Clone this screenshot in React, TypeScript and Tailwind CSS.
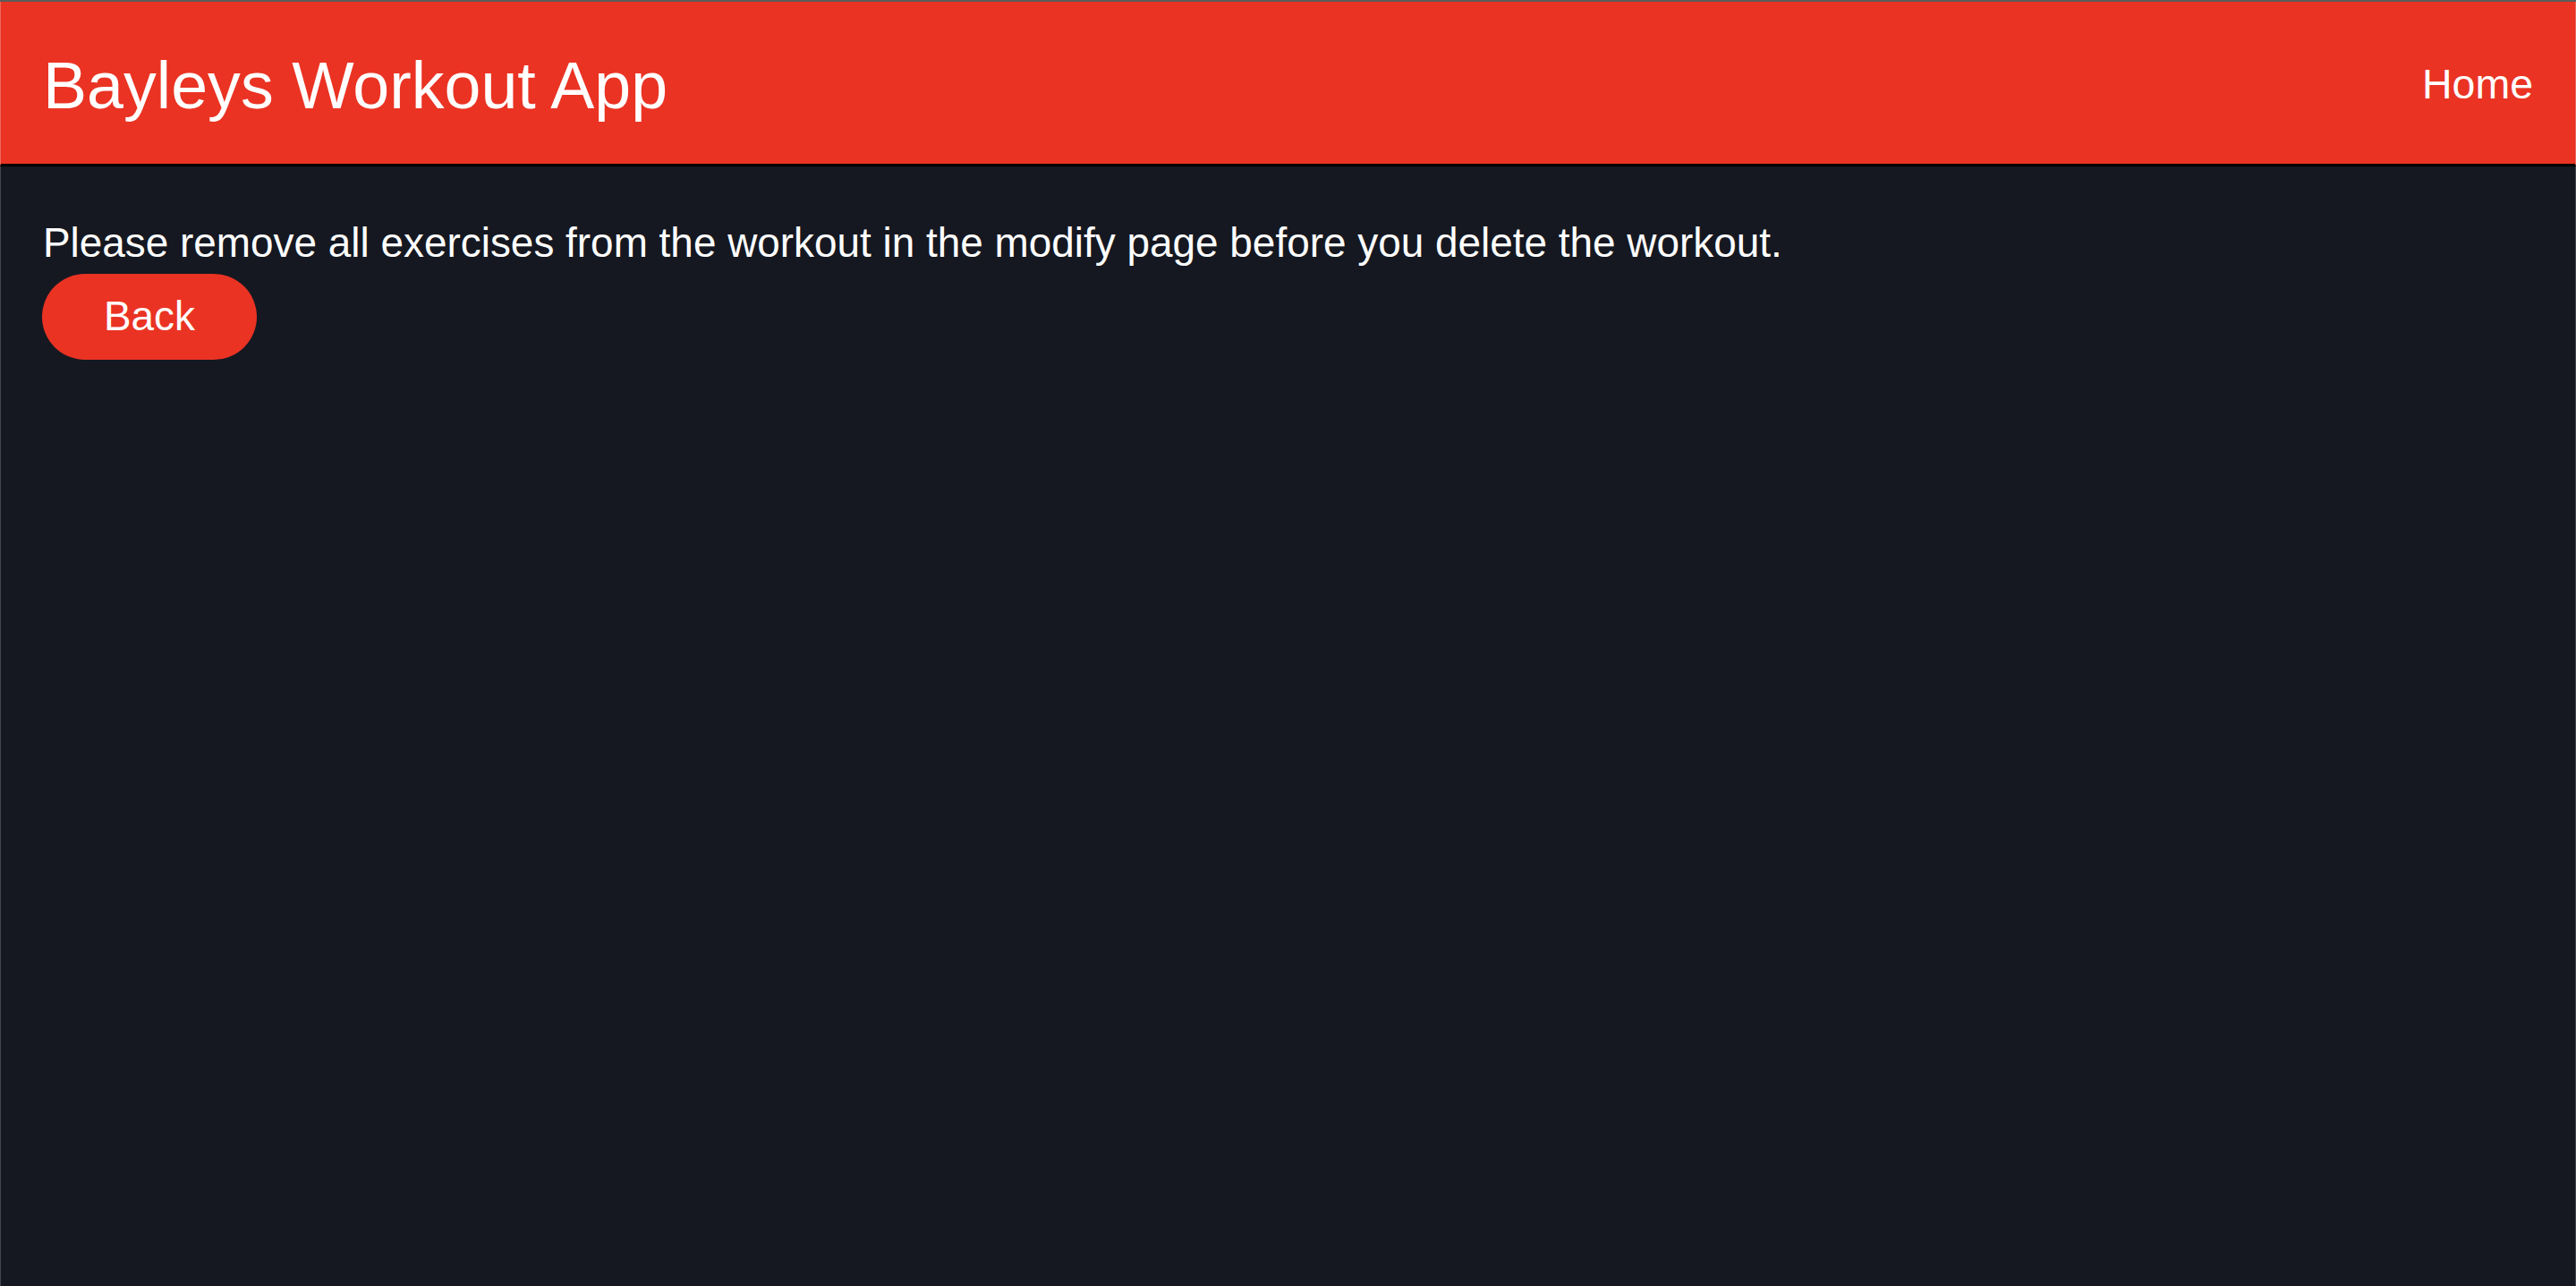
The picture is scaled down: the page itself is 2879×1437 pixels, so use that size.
export default function App() {
  const font = { fontFamily: '"Liberation Sans", Arial, sans-serif' };
  return (
    <div
      className="min-h-screen w-full flex flex-col bg-[#151821] border-t-2 border-[#5b5b5b]"
      style={font}
    >
      <header className="h-[184px] shrink-0 flex items-center justify-between bg-[#ea3323] border-x border-x-white/25 border-b-[3px] border-b-black pl-[47px] pr-[47px]">
        <h1 className="text-[73.6px] leading-none text-white mt-[7px] font-normal">Bayleys Workout App</h1>
        <a className="text-[46.5px] leading-none text-white mt-[4px] cursor-pointer">Home</a>
      </header>
      <main className="flex-1 flex flex-col items-start border-x border-x-white/20 pl-[47px] pt-[63px]">
        <p className="text-[45.9px] leading-none text-white">
          Please remove all exercises from the workout in the modify page before you delete the workout.
        </p>
        <button className="mt-[11px] -ml-[1px] w-[240px] h-[96px] rounded-full bg-[#ea3323] text-white text-[45.9px] leading-none flex items-center justify-center">
          Back
        </button>
      </main>
    </div>
  );
}
